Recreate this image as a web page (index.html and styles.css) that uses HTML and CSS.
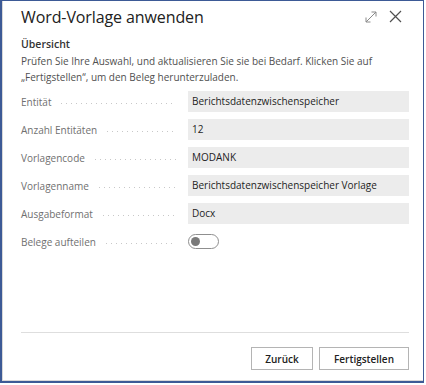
FILE: index.html
```html
<!DOCTYPE html>
<html lang="de">
<head>
  <meta charset="UTF-8">
  <meta name="viewport" content="width=device-width, initial-scale=1.0">
  <title>Word-Vorlage anwenden</title>
  <link rel="stylesheet" href="styles.css">
</head>
<body>
  <div class="dialog">
    <div class="header">
      <h1 class="title">Word-Vorlage anwenden</h1>
      <div class="header-icons">
        <svg class="icon expand" width="12" height="12" viewBox="0 0 12 12">
          <path d="M1 11 L11 1 M6.5 1 H11 V5.5 M1 6.5 V11 H5.5" fill="none" stroke="#8a8a8a" stroke-width="1"/>
        </svg>
        <svg class="icon close" width="13" height="13" viewBox="0 0 13 13">
          <path d="M1 1 L12 12 M12 1 L1 12" fill="none" stroke="#505050" stroke-width="1.2"/>
        </svg>
      </div>
    </div>

    <div class="content">
      <h2 class="section">Übersicht</h2>
      <p class="intro">Prüfen Sie Ihre Auswahl, und aktualisieren Sie sie bei Bedarf. Klicken Sie auf „Fertigstellen“, um den Beleg herunterzuladen.</p>

      <div class="fields">
        <div class="row">
          <span class="label">Entität</span>
          <span class="value">Berichtsdatenzwischenspeicher</span>
        </div>
        <div class="row">
          <span class="label">Anzahl Entitäten</span>
          <span class="value">12</span>
        </div>
        <div class="row">
          <span class="label">Vorlagencode</span>
          <span class="value">MODANK</span>
        </div>
        <div class="row">
          <span class="label">Vorlagenname</span>
          <span class="value">Berichtsdatenzwischenspeicher Vorlage</span>
        </div>
        <div class="row">
          <span class="label">Ausgabeformat</span>
          <span class="value">Docx</span>
        </div>
        <div class="row">
          <span class="label">Belege aufteilen</span>
          <span class="toggle"><span class="knob"></span></span>
        </div>
      </div>
    </div>

    <div class="footer">
      <button class="btn back">Zurück</button>
      <button class="btn finish">Fertigstellen</button>
    </div>
  </div>
</body>
</html>
```

FILE: styles.css
```css
body {
  margin: 0;
  font-family: "Open Sans", "Noto Sans", sans-serif;
  background: #fff;
  color: #212121;
}
.dialog {
  width: 424px;
  height: 383px;
  box-sizing: border-box;
  border: 1px solid #3d5a96;
  border-left-width: 2px;
  border-bottom-width: 2px;
  box-shadow: inset 1px 0 0 #d8d8d8, inset 0 -1px 0 #d8d8d8;
  display: flex;
  flex-direction: column;
  padding: 0 14px 0 19px;
}
.header {
  display: flex;
  align-items: center;
  justify-content: space-between;
  height: 31px;
}
.title {
  margin: 0;
  font-size: 16px;
  font-weight: 400;
  color: #212121;
  letter-spacing: -0.1px;
}
.header-icons {
  display: flex;
  align-items: center;
  gap: 12px;
  padding-right: 7px;
}
.icon {
  display: block;
}
.content {
  flex: 1;
}
.section {
  margin: 5px 0 0;
  font-size: 10.5px;
  font-weight: 600;
  color: #333;
}
.intro {
  margin: 2px 0 0;
  font-size: 10px;
  line-height: 16px;
  color: #505050;
}
.fields {
  margin-top: 6px;
  display: flex;
  flex-direction: column;
  gap: 7px;
}
.row {
  display: flex;
  align-items: center;
  height: 21px;
}
.label {
  width: 167px;
  display: flex;
  align-items: center;
  font-size: 10px;
  color: #707070;
  white-space: nowrap;
}
.label::after {
  content: "";
  flex: 1;
  margin: 3px 12px 0 8px;
  height: 1px;
  background-image: radial-gradient(circle, #c8c8c8 0.6px, transparent 0.9px);
  background-size: 5px 2px;
  background-position: 0 center;
}
.value {
  flex: 1;
  height: 21px;
  line-height: 21px;
  background: #ececec;
  padding-left: 4px;
  font-size: 10px;
  color: #1e1e1e;
}
.toggle {
  width: 27px;
  height: 13px;
  border: 1px solid #8f8f8f;
  border-radius: 8px;
  display: flex;
  align-items: center;
  padding-left: 2px;
  box-sizing: content-box;
}
.knob {
  width: 9px;
  height: 9px;
  border-radius: 50%;
  background: #7a7a7a;
}
.footer {
  border-top: 1px solid #dedede;
  display: flex;
  justify-content: flex-end;
  gap: 6px;
  padding: 14px 0 11px;
}
.btn {
  font-family: inherit;
  font-size: 10px;
  font-weight: 600;
  color: #212121;
  background: #fff;
  border: 1px solid #b4b4b4;
  height: 23px;
  padding: 0;
  cursor: pointer;
}
.btn.back {
  width: 62px;
}
.btn.finish {
  width: 90px;
}
```
